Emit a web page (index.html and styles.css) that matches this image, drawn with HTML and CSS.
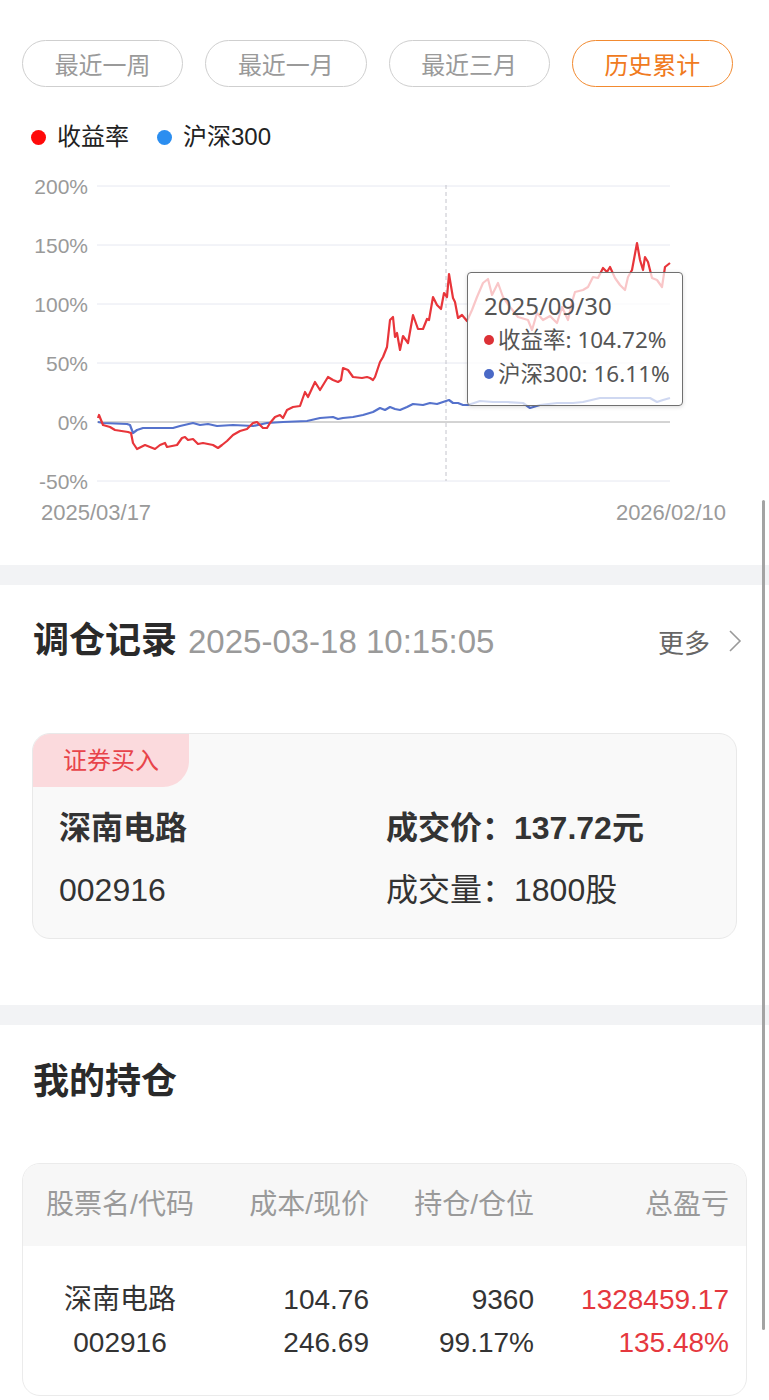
FILE: index.html
```html
<!DOCTYPE html>
<html lang="zh-CN">
<head>
  <meta charset="UTF-8">
  <meta name="viewport" content="width=device-width, initial-scale=1">
  <title>组合详情</title>
  <link rel="stylesheet" href="styles.css">
</head>
<body>
  <div class="scrollbar"></div>

  <section class="trend">
    <div class="periods">
      <button class="period">最近一周</button>
      <button class="period">最近一月</button>
      <button class="period">最近三月</button>
      <button class="period active">历史累计</button>
    </div>

    <div class="legend">
      <span class="legend-item"><i class="dot red"></i>收益率</span>
      <span class="legend-item"><i class="dot blue"></i>沪深300</span>
    </div>

    <div class="chart">
      <svg width="769" height="380" viewBox="0 160 769 380">
        <g class="grid">
          <line x1="97" y1="186" x2="670" y2="186"/>
          <line x1="97" y1="245" x2="670" y2="245"/>
          <line x1="97" y1="304" x2="670" y2="304"/>
          <line x1="97" y1="363" x2="670" y2="363"/>
          <line x1="97" y1="481" x2="670" y2="481"/>
        </g>
        <line class="zero" x1="97" y1="422" x2="670" y2="422"/>
        <g class="ylabels">
          <text x="88" y="186">200%</text>
          <text x="88" y="245">150%</text>
          <text x="88" y="304">100%</text>
          <text x="88" y="363">50%</text>
          <text x="88" y="422">0%</text>
          <text x="88" y="481">-50%</text>
        </g>
        <text class="xlabel" x="41" y="512">2025/03/17</text>
        <text class="xlabel end" x="726" y="512">2026/02/10</text>
        <line class="cursor" x1="446" y1="185" x2="446" y2="481"/>
        <polyline class="line-index" points="98,422 103,423 127,424 130,425 133,433 137,430 143,428 173,428 180,426 193,423 200,425 208,424 217,426 233,425 253,426 267,423 283,422 307,421 320,418 333,417 338,419 343,418 353,417 363,415 373,412 380,408 385,410 390,407 395,409 400,410 407,407 413,404 423,405 430,403 437,404 443,402 449,400 453,403 458,403 463,405 468,405 480,401 493,402 507,402 523,403 530,408 540,405 557,403 573,403 583,402 600,398 607,398 627,398 650,398 657,402 663,400 670,398"/>
        <polyline class="line-return" points="98,418 99,415 103,425 110,427 115,430 128,432 131,433 133,443 137,449 141,447 145,445 150,447 155,449 160,445 165,443 167,447 172,446 177,445 182,438 185,437 188,440 193,439 198,444 203,443 213,445 218,448 222,445 227,441 233,435 240,431 247,429 253,423 257,422 260,425 263,428 267,428 270,423 275,417 280,415 283,418 287,410 293,407 300,406 305,392 308,397 315,382 320,390 328,377 333,380 338,382 341,380 343,368 348,370 353,377 362,378 367,377 370,378 373,380 375,377 380,362 383,357 387,347 390,320 393,317 395,337 397,333 400,350 403,336 408,343 413,315 418,329 423,329 427,319 429,320 433,297 437,305 441,309 444,293 447,297 449,274 453,298 455,302 458,318 462,315 467,321 472,310 477,297 483,283 488,279 492,295 498,283 503,297 510,307 518,317 528,320 532,330 537,313 543,320 550,316 557,323 562,307 568,320 572,302 575,292 583,290 588,287 593,277 598,278 603,268 607,272 610,267 615,278 620,285 625,290 628,277 632,270 637,243 640,260 643,270 645,257 648,262 652,278 657,280 662,287 665,267 670,263"/>
      </svg>

      <div class="tooltip">
        <div class="tip-date">2025/09/30</div>
        <div class="tip-row"><i class="tip-dot red"></i>收益率: 104.72%</div>
        <div class="tip-row"><i class="tip-dot blue"></i>沪深300: 16.11%</div>
      </div>
    </div>
  </section>

  <div class="band"></div>

  <section class="records">
    <div class="section-head">
      <h2>调仓记录</h2>
      <span class="head-date">2025-03-18 10:15:05</span>
      <a class="more">更多
        <svg width="14" height="24" viewBox="0 0 14 24"><polyline points="2,2 12,12 2,22"/></svg>
      </a>
    </div>

    <div class="trade-card">
      <div class="tag">证券买入</div>
      <div class="trade-body">
        <div class="cell strong">深南电路</div>
        <div class="cell strong">成交价：137.72元</div>
        <div class="cell">002916</div>
        <div class="cell">成交量：1800股</div>
      </div>
    </div>
  </section>

  <div class="band"></div>

  <section class="holdings">
    <h2>我的持仓</h2>

    <div class="hold-table">
      <div class="hold-row head">
        <span class="c-name">股票名/代码</span>
        <span>成本/现价</span>
        <span>持仓/仓位</span>
        <span>总盈亏</span>
      </div>
      <div class="hold-body">
        <div class="hold-row">
          <span class="c-name">深南电路</span>
          <span>104.76</span>
          <span>9360</span>
          <span class="up">1328459.17</span>
        </div>
        <div class="hold-row">
          <span class="c-name">002916</span>
          <span>246.69</span>
          <span>99.17%</span>
          <span class="up">135.48%</span>
        </div>
      </div>
    </div>
  </section>
</body>
</html>
```

FILE: styles.css
```css
body {
  margin: 0;
  background-color: #fff;
  color: #333;
  font-family: 'Liberation Sans', 'Noto Sans CJK SC', sans-serif;
  position: relative;
}

.scrollbar {
  position: absolute;
  left: 762px;
  top: 500px;
  width: 3px;
  height: 830px;
  background-color: #a3a3a3;
  border-radius: 2px;
}

/* 走势 */
.trend {
  padding-bottom: 25px;
}

.periods {
  display: grid;
  grid-template-columns: repeat(4, 1fr);
  gap: 22px;
  padding: 40px 36px 0 22px;
}

.period {
  height: 47px;
  border: 1.5px solid #cfcfcf;
  border-radius: 24px;
  background: #fff;
  color: #9a9a9a;
  font-family: inherit;
  font-size: 24px;
  padding: 0;
}

.period.active {
  border-color: #f28a30;
  color: #f07a20;
}

.legend {
  display: flex;
  gap: 28px;
  margin-top: 35px;
  padding-left: 31px;
  font-size: 24px;
  line-height: 30px;
  color: #222;
}

.legend-item {
  display: flex;
  align-items: center;
}

.dot {
  width: 15px;
  height: 15px;
  border-radius: 50%;
  margin-right: 11px;
}

.dot.red {
  background-color: #ff0a0a;
}

.dot.blue {
  background-color: #2b8ef0;
}

.chart {
  position: relative;
  height: 380px;
  margin-top: 8px;
}

.chart svg {
  display: block;
}

.grid line {
  stroke: #e6e8f1;
  stroke-width: 1;
}

.zero {
  stroke: #a8a8a8;
  stroke-width: 1;
}

.ylabels text {
  fill: #9a9a9a;
  font-size: 21px;
  text-anchor: end;
  dominant-baseline: central;
}

.xlabel {
  fill: #9a9a9a;
  font-size: 22px;
  dominant-baseline: central;
}

.xlabel.end {
  text-anchor: end;
}

.cursor {
  stroke: #c4c4cc;
  stroke-width: 1;
  stroke-dasharray: 4 3;
}

.line-return,
.line-index {
  fill: none;
  stroke-width: 2.2;
  stroke-linejoin: round;
}

.line-return {
  stroke: #e8353a;
}

.line-index {
  stroke: #5572cc;
}

.tooltip {
  position: absolute;
  left: 467px;
  top: 112px;
  width: 216px;
  height: 134px;
  padding: 15px 0 0 16px;
  box-sizing: border-box;
  background-color: rgba(255, 255, 255, 0.72);
  border: 1px solid #707070;
  border-radius: 4px;
  box-shadow: 0 1px 4px rgba(0, 0, 0, 0.15);
  font-family: 'Noto Sans', 'Noto Sans CJK SC', sans-serif;
  color: #555;
}

.tip-date {
  font-size: 24px;
  line-height: 35px;
}

.tip-row {
  display: flex;
  align-items: center;
  font-size: 22.5px;
  line-height: 34px;
}

.tip-dot {
  width: 10px;
  height: 10px;
  border-radius: 50%;
  margin-right: 4px;
}

.tip-dot.red {
  background-color: #dc3136;
}

.tip-dot.blue {
  background-color: #4a69c6;
}

.band {
  height: 20px;
  background-color: #f2f3f5;
}

/* 调仓记录 */
.records {
  padding: 34px 0 66px;
}

.section-head {
  display: flex;
  align-items: baseline;
  padding: 0 27px 0 33px;
}

h2 {
  margin: 0;
  font-size: 36px;
  line-height: 44px;
  font-weight: bold;
  color: #2a2a2a;
}

.head-date {
  margin-left: 11px;
  font-size: 33px;
  color: #9a9a9a;
}

.more {
  margin-left: auto;
  display: flex;
  align-items: center;
  gap: 18px;
  font-size: 26px;
  color: #666;
  align-self: center;
}

.more polyline {
  fill: none;
  stroke: #9a9a9a;
  stroke-width: 1.6;
}

.trade-card {
  margin: 70px 32px 0;
  background-color: #f9f9f9;
  border: 1px solid #e9e9e9;
  border-radius: 18px;
  overflow: hidden;
}

.tag {
  width: 156px;
  height: 53px;
  line-height: 53px;
  text-align: center;
  font-size: 24px;
  color: #e8444a;
  background-color: #fbdadd;
  border-radius: 0 0 26px 0;
}

.trade-body {
  display: grid;
  grid-template-columns: 327px 1fr;
  padding: 10px 0 17px 26px;
}

.cell {
  font-size: 32px;
  line-height: 62px;
  color: #333;
}

.cell.strong {
  font-weight: bold;
}

/* 我的持仓 */
.holdings {
  padding: 35px 0 40px;
}

.holdings h2 {
  padding-left: 33px;
}

.hold-table {
  margin: 59px 22px 0;
  border: 1px solid #ebebeb;
  border-radius: 18px;
  overflow: hidden;
}

.hold-row {
  display: grid;
  grid-template-columns: 160px 169px 165px 195px;
  padding: 0 17px;
  font-size: 28px;
  line-height: 43px;
  color: #333;
  text-align: right;
}

.hold-row .c-name {
  text-align: center;
}

.hold-row.head {
  line-height: 82px;
  color: #9a9a9a;
  background-color: #f7f7f7;
}

.hold-body {
  padding: 32px 0 31px;
}

.up {
  color: #e5383e;
}
```
